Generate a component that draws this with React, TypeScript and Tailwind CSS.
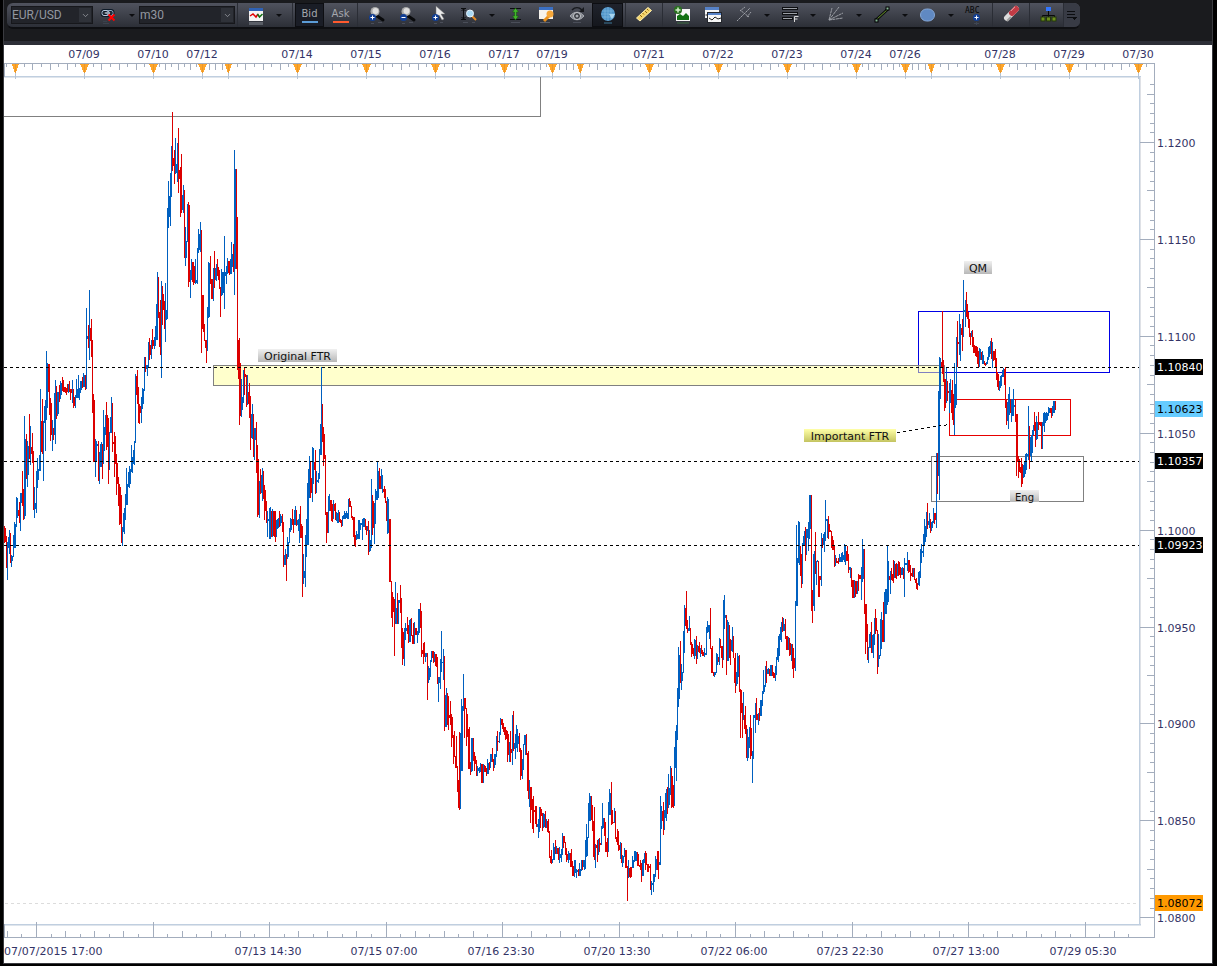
import { ReactNode } from "react";
import { ChevronDown } from "lucide-react";

/* Price bars, one per horizontal unit: first value is the x of the row's first bar,
   then u (up) or d (down) with high-low. */
const ROWS: [number, string][] = [
  [4, "d526-543 d528-542 d536-568 u542-580 u537-548 u530-554 d533-563 u555-567 u556-561 u535-557"],
  [14, "u522-548 u524-548 u497-527 u498-518 d510-516 d502-523 u493-531 u493-503 d471-506 d489-520"],
  [24, "u416-519 u439-516 d434-479 u441-487 u446-475 d414-459 u426-465 d447-454 d433-463 d451-510"],
  [34, "u487-518 u503-509 u471-513 u458-488 u469-480 u455-471 u389-471 d421-452 d399-454 u421-481"],
  [44, "u406-423 u400-451 u351-420 u363-408 d364-392 d364-415 d398-441 d403-435 u420-451 d428-440"],
  [54, "u393-435 u380-444 d386-419 u392-416 u392-414 d385-402 u381-399 u383-395 d377-391 d380-392"],
  [64, "d387-392 d387-393 d388-395 d384-392 u384-393 d381-392 d389-400 d389-393 u380-403 d389-408"],
  [74, "d397-406 u395-408 u379-398 u389-398 u375-398 u388-400 u381-393 u381-390 d377-388 u373-387"],
  [84, "u375-387 d375-390 u308-389 u336-339 d325-348 u290-360 d328-341 d319-357 d340-413 d394-462"],
  [94, "d400-462 u439-477 u441-462 u444-446 d441-481 u452-484 u444-467 u442-467 d444-479 u410-464"],
  [104, "u427-451 u415-435 d402-450 d415-447 d418-484 u432-470 u417-433 u397-433 d403-452 d442-444"],
  [114, "d432-477 d436-464 d454-495 d463-484 d477-506 d484-525 d487-524 d495-543 u527-546 u513-532"],
  [124, "u508-534 u494-520 u468-505 u484-505 u472-487 u466-488 u469-484 u445-472 u457-473 u450-464"],
  [134, "u441-465 u374-443 d376-395 d370-404 d387-423 d404-424 d406-413 u397-423 u388-409 u389-404"],
  [144, "u357-391 d357-372 u365-369 u365-376 u342-367 d338-360 d345-355 u340-359 d329-349 d340-346"],
  [154, "u337-349 u326-346 u304-340 u272-340 d277-318 d312-347 d300-355 u281-378 d286-325 d294-310"],
  [164, "d301-329 u283-342 u310-320 u208-319 u181-228 u196-217 u173-226 u146-197 d112-171 d158-166"],
  [174, "d150-184 u138-174 u164-173 u143-182 d128-193 d170-179 d167-217 d154-213 u195-210 u185-213"],
  [184, "d190-258 u227-266 u241-258 u204-242 d202-287 d205-282 u270-298 u259-280 d262-282 d262-285"],
  [194, "d266-283 u259-284 u280-283 u248-284 u229-253 u234-250 u222-252 d230-353 d295-329 d295-332"],
  [204, "d324-341 d340-348 d340-363 u307-351 u262-318 u263-317 d256-284 d279-299 d279-299 u268-301"],
  [214, "d251-288 u268-280 u264-281 d259-276 d267-280 d270-289 d287-317 u269-296 u272-295 u272-293"],
  [224, "u236-309 u272-276 u266-284 u258-274 d261-273 d261-275 u259-274 u242-274 u254-267 d244-272"],
  [234, "u150-295 u169-269 d169-269 d217-370 d340-379 d338-425 d363-416 u379-417 u397-410 u370-403"],
  [244, "d368-395 d374-377 d375-407 u375-405 d392-404 d383-418 d396-450 u414-438 u404-439 d414-457"],
  [254, "u428-460 u428-440 d422-473 d445-517 d459-515 u481-518 d469-494 u475-493 u468-501 d471-499"],
  [264, "d485-520 d490-511 d501-523 u511-537 u519-521 u508-539 u507-539 d511-537 u509-537 d511-536"],
  [274, "d511-537 d511-542 u520-537 u519-529 u518-528 d511-527 u514-526 u516-523 d514-532 d522-567"],
  [284, "u555-565 u549-565 d554-581 u537-559 u542-557 u528-543 u518-532 u519-530 d509-525 d519-533"],
  [294, "u510-525 u506-525 d510-526 u520-525 u519-531 u514-543 d506-538 d524-538 d526-597 u554-584"],
  [304, "u571-578 u535-587 u519-557 u483-545 u469-545 u456-498 d461-498 d478-493 u447-502 u448-484"],
  [314, "d462-470 d450-494 u471-493 u480-482 u473-483 u449-479 u424-455 u367-455 d404-442 d427-466"],
  [324, "d434-459 d455-515 d512-543 d512-533 u496-533 u494-511 d500-511 d500-521 d504-522 u500-519"],
  [334, "d504-511 d503-520 u512-521 u513-523 u510-523 d512-522 d519-523 d520-527 u516-526 u515-519"],
  [344, "u511-519 u513-519 u511-518 u513-519 u499-519 d498-507 d501-507 d506-518 d516-520 d517-537"],
  [354, "d517-545 d535-547 u531-540 u534-539 u520-539 u520-539 u523-530 u523-525 u519-540 u518-527"],
  [364, "u518-527 d519-530 d526-535 u526-531 d521-555 u530-552 u540-551 u479-548 d495-535 d501-528"],
  [374, "u503-544 u489-524 u491-500 u462-500 u471-498 d468-489 d476-489 u469-489 u475-493 d489-492"],
  [384, "d486-498 d489-503 d501-521 u497-534 u499-533 d519-582 d519-582 d581-618 d592-627 d597-612"],
  [394, "d599-656 u582-624 u608-624 d593-624 u600-624 u600-603 d585-613 d598-648 d628-665 d632-659"],
  [404, "u628-666 u623-640 u628-631 d617-634 d625-643 u620-642 u619-642 d618-636 d635-644 d623-644"],
  [414, "u622-644 d628-635 d628-635 u631-643 u609-635 u609-633 d603-628 d611-657 d650-654 d643-664"],
  [424, "d642-657 u653-662 u653-657 d653-700 u666-683 u668-680 u660-677 u651-662 d651-658 d651-663"],
  [434, "u652-662 d654-666 d654-667 d657-684 u677-702 u677-683 u659-689 u631-672 u662-663 u649-680"],
  [444, "d656-731 u695-727 u688-727 d693-725 d696-730 d715-718 d701-725 d714-747 d717-738 d735-764"],
  [454, "d731-757 d756-768 d736-768 d766-792 d780-808 d732-810 u733-809 u699-771 u706-771 u674-711"],
  [464, "d698-738 d698-709 d708-746 d714-737 d729-769 d727-769 d762-775 u738-772 u738-771 d738-761"],
  [474, "d752-771 d756-764 d760-776 u766-776 u768-771 u767-773 u763-772 d764-783 d764-783 u764-783"],
  [484, "d765-772 d766-772 d768-776 u759-774 u763-774 d762-770 u754-768 u754-762 d748-762 d759-771"],
  [494, "u754-768 u754-765 u736-757 d731-751 d741-742 u732-743 u718-735 d719-725 d719-729 d723-732"],
  [504, "d727-735 d727-740 d730-739 d731-762 d734-755 u742-762 d731-762 d749-753 u715-765 d711-751"],
  [514, "u743-749 u734-759 u725-748 u729-752 u736-744 d733-752 d748-780 d750-776 u759-779 u744-770"],
  [524, "u735-745 u735-755 d734-755 d753-791 d751-799 u780-807 d787-823 d787-810 d799-829 d796-833"],
  [534, "d810-812 d806-824 d806-827 u824-827 u819-838 u807-832 d807-828 d809-816 d813-831 u813-828"],
  [544, "u814-827 d811-828 u819-828 d821-832 d819-833 d831-858 d856-863 d850-864 u859-863 u843-860"],
  [554, "u847-860 d840-854 u846-854 d848-854 d848-860 u847-863 u854-858 u849-862 u833-855 d836-848"],
  [564, "d836-843 d842-855 d848-862 d854-860 u851-863 u853-860 d853-867 d849-867 d861-876 d866-876"],
  [574, "u860-877 u860-873 u869-878 u870-872 d869-876 u863-876 u869-876 u860-871 d860-870 u860-867"],
  [584, "u860-870 u840-869 u824-857 u837-856 u803-838 u793-821 u796-821 d796-820 d805-831 d821-857"],
  [594, "d807-860 u844-868 d845-848 d840-862 u839-855 d838-852 d843-845 u826-845 u803-829 u818-828"],
  [604, "d818-836 d822-852 d842-852 d838-857 u802-852 u789-815 u793-815 d782-825 d810-824 d822-823"],
  [614, "u808-823 d811-839 d837-842 d829-845 d831-851 d845-850 u842-859 d843-863 u855-867 u856-863"],
  [624, "u848-857 d850-868 d850-868 d866-901 u860-878 d868-877 d867-878 d867-877 u856-868 u860-868"],
  [634, "u851-862 u851-861 u852-861 d852-866 d854-866 d865-867 d860-870 d863-882 u860-876 u859-876"],
  [644, "u853-863 d851-870 d853-865 d864-872 d864-872 d866-868 d864-890 u881-895 u883-885 u874-892"],
  [654, "u874-882 u856-877 u859-870 d851-870 d851-879 u862-865 u796-865 u806-829 d811-821 d802-835"],
  [664, "u810-830 u793-818 u789-821 d787-814 u774-808 u788-805 u766-795 d768-808 d776-807 d785-808"],
  [674, "u747-806 u731-768 u725-781 u688-740 u647-707 u655-699 d641-683 u664-690 u672-681 u631-673"],
  [684, "u605-653 d608-626 d591-629 d620-633 u628-631 u616-631 d628-645 d642-657 d644-654 d648-656"],
  [694, "u639-659 u640-656 d636-664 u645-659 d646-652 d642-653 u648-657 d645-654 d650-656 d652-656"],
  [704, "u648-657 u653-655 u627-655 u621-633 u625-632 u625-639 d608-649 d648-673 d646-673 d672-676"],
  [714, "u672-677 u672-675 u653-673 u654-665 d657-662 u638-665 d639-648 d646-658 d646-668 u600-660"],
  [724, "u595-629 u615-618 d615-675 u620-661 u622-661 d625-658 d639-665 u640-651 u627-652 d636-658"],
  [734, "d658-683 d653-693 u672-686 u653-684 u656-677 d655-692 d689-738 d690-713 d703-738 u692-720"],
  [744, "d715-729 d706-734 d725-758 u729-761 u737-758 u727-748 d715-759 d728-756 u751-783 u715-759"],
  [754, "u715-718 u703-733 d698-720 d714-720 u713-725 d708-721 u700-716 u700-716 u691-706 u670-694"],
  [764, "u685-692 u666-687 d661-683 u669-674 u668-674 d669-676 u665-676 u665-676 d665-676 d672-678"],
  [774, "d673-678 u666-681 u657-675 u648-660 u636-662 u634-656 u627-640 u622-642 d617-632 u618-631"],
  [784, "u624-631 d619-639 d636-650 d636-650 u637-650 d638-656 d643-655 u644-661 d644-669 d648-678"],
  [794, "d658-668 u601-671 u525-606 u558-606 u521-563 u522-565 d546-576 d554-588 u543-584 u536-545"],
  [804, "u531-546 d527-561 u529-555 u529-538 u522-551 u495-539 u495-529 d495-611 d590-623 u554-606"],
  [814, "u551-611 d532-574 u561-585 u560-562 d561-597 d576-597 d576-580 u533-586 d538-548 u534-545"],
  [824, "u532-552 u500-541 u519-521 u519-538 d516-539 d524-532 d530-532 d531-548 d536-550 d540-550"],
  [834, "d546-567 u555-566 d558-563 d561-563 d558-564 u554-562 u557-562 u553-562 u552-562 u555-560"],
  [844, "u544-562 u545-565 d551-561 d546-561 d554-573 u567-570 u567-578 d568-587 d580-598 d580-598"],
  [854, "u580-598 d581-597 d581-594 u581-594 d574-591 d575-579 d575-579 u567-600 u539-582 u549-579"],
  [864, "d549-614 d604-654 d604-642 d624-660 u647-663 u634-648 u632-648 d622-653 u635-653 u634-658"],
  [874, "u618-645 d609-634 d618-631 d630-674 u634-667 u655-659 u619-656 u612-649 d620-642 d602-642"],
  [884, "u592-642 u589-614 u589-614 u546-605 u561-602 d576-580 u571-594 d568-580 d574-581 d560-583"],
  [894, "u561-578 d564-578 d563-579 u564-576 d561-576 d562-575 d567-578 u568-575 u567-575 d568-579"],
  [904, "u558-597 u563-565 u563-565 u552-571 d560-573 d560-572 d565-581 d573-576 d568-577 u568-577"],
  [914, "d568-580 d579-583 d578-589 d583-590 u572-585 u571-586 u549-578 u544-563 u551-553 u534-557"],
  [924, "u519-546 u526-542 u512-537 d503-529 u521-525 u513-528 d519-533 u522-531 u521-528 u508-523"],
  [934, "d513-524 d513-520 u453-528 d453-494 u391-476 u357-500 u358-399 d362-368 d311-374 d360-382"],
  [944, "d379-411 d379-408 u367-403 d381-401 d391-393 u383-413 u379-403 d390-413 d380-420 d394-425"],
  [954, "u363-435 u384-408 u337-405 d321-367 d342-344 u314-355 u324-361 d328-335 d319-351 u280-337"],
  [964, "u310-312 u300-327 d292-317 d304-319 d312-328 d319-337 d333-345 u331-337 d330-347 d337-353"],
  [974, "d345-353 d346-356 d346-357 d347-364 d351-367 u348-367 u349-360 d352-360 u351-364 u355-364"],
  [984, "d361-365 d363-366 u362-365 u357-364 u347-360 u346-357 u341-354 d338-359 u342-368 d351-361"],
  [994, "d351-360 d349-367 d358-380 d372-387 d374-390 u381-391 u376-388 u375-386 u370-377 u368-377"],
  [1004, "d369-385 d367-408 d399-425 u402-421 u394-429 u387-415 d399-413 u399-422 u399-416 u389-416"],
  [1014, "u405-407 d399-422 d414-476 d414-462 d456-478 d459-472 d467-473 d458-487 d464-484 u465-478"],
  [1024, "u461-477 u454-474 u453-470 u454-456 u406-460 d426-469 u437-456 u435-461 u430-453 u425-435"],
  [1034, "d412-431 d422-447 u416-440 u422-439 d412-430 d422-425 d422-426 d422-449 u422-449 u413-426"],
  [1044, "u412-432 u413-423 u412-421 u413-420 u407-416 u408-413 d408-413 d408-418 u406-416 u401-413"],
  [1054, "u401-413 d401-410"],
];

const BARS = ROWS.flatMap(([start, row]) =>
  row.split(" ").map((token, i) => {
    const [high, low] = token.slice(1).split("-").map(Number);
    return { x: start + i, high, low, up: token[0] === "u" };
  }),
);

const SESSIONS: { x: number; label?: string }[] = [
  { x: 15 },
  { x: 84, label: "07/09" },
  { x: 153, label: "07/10" },
  { x: 202, label: "07/12" },
  { x: 228 },
  { x: 297, label: "07/14" },
  { x: 366, label: "07/15" },
  { x: 435, label: "07/16" },
  { x: 504, label: "07/17" },
  { x: 552, label: "07/19" },
  { x: 580 },
  { x: 649, label: "07/21" },
  { x: 718, label: "07/22" },
  { x: 787, label: "07/23" },
  { x: 856, label: "07/24" },
  { x: 905, label: "07/26" },
  { x: 931 },
  { x: 1000, label: "07/28" },
  { x: 1069, label: "07/29" },
  { x: 1138, label: "07/30" },
];

const PRICES = ["1.1200", "1.1150", "1.1100", "1.1050", "1.1000", "1.0950", "1.0900", "1.0850", "1.0800"];
const TIMES = ["07/13 14:30", "07/15 07:00", "07/16 23:30", "07/20 13:30", "07/22 06:00", "07/23 22:30", "07/27 13:00", "07/29 05:30"];

const TAGS = [
  { y: 367, text: "1.10840", bg: "#000000", fg: "#ffffff" },
  { y: 409, text: "1.10623", bg: "#66ccff", fg: "#000000" },
  { y: 461, text: "1.10357", bg: "#000000", fg: "#ffffff" },
  { y: 545, text: "1.09923", bg: "#000000", fg: "#ffffff" },
  { y: 903, text: "1.08072", bg: "#ff9900", fg: "#000000" },
];

const NOTES = [
  { x: 258, y: 349, w: 79, h: 13, text: "Original FTR", size: 11, fill: "url(#note-gray)" },
  { x: 964, y: 261, w: 28, h: 13, text: "QM", size: 11, fill: "url(#note-gray)" },
  { x: 804, y: 429, w: 92, h: 13, text: "Important FTR", size: 11, fill: "url(#note-yellow)" },
  { x: 1010, y: 490, w: 29, h: 12, text: "Eng", size: 10, fill: "url(#note-gray)" },
];

function TopAxis() {
  return (
    <g>
      <rect x="4" y="63" width="1151" height="1" fill="#a3adbd" />
      <rect x="4" y="76" width="1137" height="1" fill="#c0cfe0" />
      <rect x="4" y="77" width="1136" height="1" fill="#dfe5ec" />
      <rect x="4" y="63" width="1" height="14" fill="#a3adbd" />
      <rect x="6" y="64" width="1" height="3" fill="#a3adbd" />
      {SESSIONS.slice(0, -1).flatMap((s, i) => {
        const span = SESSIONS[i + 1].x - s.x;
        const parts = span < 35 ? 4 : 8;
        return Array.from({ length: parts - 1 }, (_, k) => (
          <rect
            key={`${i}-${k}`}
            x={Math.round(s.x + (span * (k + 1)) / parts)}
            y="64"
            width="1"
            height={parts === 4 || k % 2 ? 6 : 3}
            fill="#a3adbd"
          />
        ));
      })}
      <rect x="1146" y="64" width="1" height="3" fill="#a3adbd" />
      {SESSIONS.map((s) => {
        const half = s.label ? 4 : 3;
        return (
          <g key={s.x}>
            <rect x={s.x} y="72" width="1" height="7" fill="#b4c3d4" />
            <polygon points={`${s.x - half},64 ${s.x + half + 1},64 ${s.x + 1},73 ${s.x},73`} fill="#ffa529" />
            <rect x={s.x} y="64" width="1" height="9" fill="#e8982c" />
            {s.label && (
              <text x={s.x} y="58" textAnchor="middle" fontSize="11" fill="#333366">
                {s.label}
              </text>
            )}
          </g>
        );
      })}
    </g>
  );
}

function PriceAxis() {
  const step = 96.9;
  const ticks = Array.from({ length: 87 }, (_, i) => i - 6);
  return (
    <g>
      <rect x="1139" y="76" width="1" height="849" fill="#c0cfe0" />
      <rect x="1140" y="77" width="1" height="848" fill="#dfe1e6" />
      <rect x="1154" y="63" width="1" height="875" fill="#a3adbd" />
      {ticks.map((n) => {
        const length = n % 10 === 0 ? 14 : n % 5 === 0 ? 7 : 4;
        return (
          <rect key={n} x={1154 - length} y={Math.round(142 + (n * step) / 10)} width={length} height="1" fill="#a3adbd" />
        );
      })}
      {PRICES.map((p, i) => (
        <text key={p} x="1157" y={Math.round(147 + i * step)} fontSize="11" fill="#333366">
          {p}
        </text>
      ))}
    </g>
  );
}

function TimeAxis() {
  const step = 116.5;
  const ticks = Array.from({ length: 78 }, (_, i) => i - 2).filter((n) => 36 + (n * step) / 8 < 1150);
  return (
    <g>
      <rect x="4" y="924" width="1137" height="1" fill="#c0cfe0" />
      <rect x="4" y="925" width="1137" height="1" fill="#dfe5ec" />
      <rect x="4" y="937" width="1151" height="1" fill="#a3adbd" />
      <rect x="4" y="924" width="1" height="13" fill="#a3adbd" />
      {ticks.map((n) => {
        const height = n % 8 === 0 ? 15 : n % 2 === 0 ? 6 : 3;
        return <rect key={n} x={Math.round(36 + (n * step) / 8)} y={937 - height} width="1" height={height} fill="#a3adbd" />;
      })}
      <text x="4" y="955" fontSize="11" fill="#333366">
        07/07/2015 17:00
      </text>
      {TIMES.map((t, i) => (
        <text key={t} x={Math.round(268 + i * 116.4)} y="955" textAnchor="middle" fontSize="11" fill="#333366">
          {t}
        </text>
      ))}
    </g>
  );
}

function PriceChart() {
  return (
    <svg
      viewBox="4 45 1208 918"
      className="block h-auto w-full bg-white font-['DejaVu_Sans',sans-serif]"
      role="img"
      aria-label="EUR/USD 30 minute chart"
    >
      <defs>
        <linearGradient id="note-gray" x1="0" y1="0" x2="0" y2="1">
          <stop offset="0" stopColor="#f0f0f0" />
          <stop offset="1" stopColor="#b8b8b8" />
        </linearGradient>
        <linearGradient id="note-yellow" x1="0" y1="0" x2="0" y2="1">
          <stop offset="0" stopColor="#ffffa8" />
          <stop offset="1" stopColor="#c4c460" />
        </linearGradient>
      </defs>
      <g shapeRendering="crispEdges">
        <TopAxis />
        <PriceAxis />
        <TimeAxis />
        <path d="M4 116.5H540.5V77" fill="none" stroke="#808080" />
        <path d="M5 903.5H1139" stroke="#dcdcdc" strokeDasharray="3 3" />
        <rect x="918.5" y="311.5" width="191" height="61" fill="none" stroke="#0000e6" />
        <rect x="213.5" y="365.5" width="731" height="20" fill="#ffff99" fillOpacity="0.5" stroke="#808080" />
        <rect x="949.5" y="399.5" width="121" height="36" fill="none" stroke="#e60000" />
        <rect x="931.5" y="456.5" width="152" height="45" fill="none" stroke="#808080" />
        {BARS.map((b) => (
          <rect key={b.x} x={b.x} y={b.high} width="1" height={b.low - b.high} fill={b.up ? "#0060c0" : "#dc0000"} />
        ))}
        {[367, 461, 545].map((y) => (
          <path key={y} d={`M4 ${y}.5H1139`} stroke="#000000" strokeDasharray="3 3" />
        ))}
        <path d="M897 432.5L949 424.5" stroke="#000000" strokeDasharray="3 3" />
      </g>
      {NOTES.map((n) => (
        <g key={n.text}>
          <rect x={n.x} y={n.y} width={n.w} height={n.h} fill={n.fill} />
          <text x={n.x + n.w / 2} y={n.y + 11} textAnchor="middle" fontSize={n.size} fill="#111111">
            {n.text}
          </text>
        </g>
      ))}
      {TAGS.map((t) => (
        <g key={t.text}>
          <rect x="1155" y={t.y - 8} width="48" height="16" fill={t.bg} />
          <text x="1157" y={t.y + 4} fontSize="11" fill={t.fg}>
            {t.text}
          </text>
        </g>
      ))}
    </svg>
  );
}

function Icon({ children }: { children: ReactNode }) {
  return (
    <svg width="18" height="20" viewBox="0 -2 18 20" fill="none" aria-hidden="true" className="overflow-visible">
      {children}
    </svg>
  );
}

function PlusBadge({ x, y, minus }: { x: number; y: number; minus?: boolean }) {
  return (
    <g>
      <circle cx={x} cy={y} r="3.5" fill="#123f95" />
      <path d={minus ? `M${x - 2} ${y}h4` : `M${x - 2} ${y}h4M${x} ${y - 2}v4`} stroke="#fff" />
    </g>
  );
}

const LinkIcon = () => (
  <Icon>
    <rect x="2" y="3.5" width="7" height="5" rx="2" stroke="#0d1a28" strokeWidth="3" />
    <rect x="7" y="3.5" width="6" height="5" rx="2" stroke="#0d1a28" strokeWidth="3" />
    <rect x="2" y="3.5" width="7" height="5" rx="2" stroke="#b6cbe0" />
    <rect x="7" y="3.5" width="6" height="5" rx="2" stroke="#8fa9c4" />
    <path d="M5 6h5" stroke="#dce9f5" />
    <path d="M8.500 7.500l6 6M14.500 7.500l-6 6" stroke="#ff0000" strokeWidth="2" />
    <path d="M3 16.500h6M3 14.500h4" stroke="#3c424d" />
  </Icon>
);

const ChartIcon = () => (
  <Icon>
    <rect x="2" y="1" width="14" height="13" fill="#f4f4f4" />
    <rect x="2" y="1" width="14" height="3" fill="#2f62b5" />
    <path d="M3 9l3-2 3 3 2-3" stroke="#e00000" strokeWidth="1.5" />
    <path d="M10.500 7l2 3 3-3" stroke="#107010" strokeWidth="1.5" />
    <rect x="2" y="15" width="14" height="3" fill="#777b83" opacity=".6" />
  </Icon>
);

const ZoomIcon = ({ minus }: { minus?: boolean }) => (
  <Icon>
    <path d="M10 9l6 4" stroke="#08090b" strokeWidth="3" strokeLinecap="round" />
    <circle cx="8" cy="4.500" r="4.500" fill="#a8a8a8" />
    <circle cx="8.500" cy="4" r="3" fill="#dedede" />
    <PlusBadge x={5.5} y={10.5} minus={minus} />
    <path d="M4 16.500h3M11 15.500h4" stroke="#4a4e59" />
  </Icon>
);

const CursorIcon = () => (
  <Icon>
    <path d="M7 -1v11l3-2 3 5 2-1-3-5h4z" fill="#ececec" stroke="#777" strokeWidth=".5" />
    <PlusBadge x={6.5} y={10.5} />
    <path d="M5 16.500h3M11 15.500h3" stroke="#4a4e59" />
  </Icon>
);

const ZoomYIcon = () => (
  <Icon>
    <path d="M3.500 2v10M1 1.500h5M1 12.500h5M1.500 4l2-2 2 2M1.500 10l2 2 2-2" stroke="#0b0c0e" />
    <path d="M12 9l4 4" stroke="#e58b24" strokeWidth="2" />
    <circle cx="10" cy="6.500" r="3.500" fill="#a9d9f4" stroke="#e6f4fc" />
    <path d="M3 15.500h5M12 15.500h3" stroke="#4a4e59" />
  </Icon>
);

const StretchIcon = () => (
  <Icon>
    <path d="M4 1.500h11M4 12.500h11" stroke="#0b0c0e" />
    <path d="M9.500 1l3 4h-2v4h2l-3 4-3-4h2V5h-2z" fill="#43b52c" stroke="#125d0b" strokeWidth=".5" />
    <path d="M5 15.500h9" stroke="#4a4e59" />
  </Icon>
);

const WindowKeyIcon = () => (
  <Icon>
    <rect x="2" y="0" width="14" height="12" fill="#f6f3ee" />
    <rect x="2" y="0" width="14" height="3" fill="#3b70c4" />
    <path d="M7 14l6-6" stroke="#e8901c" strokeWidth="3" />
    <circle cx="13" cy="7" r="3.500" fill="#f6a73a" />
    <path d="M3 15.500h10" stroke="#5c606b" />
  </Icon>
);

const EyeIcon = () => (
  <Icon>
    <path d="M2 9c4-5 10-5 14 0-4 5-10 5-14 0z" fill="#858990" stroke="#a7aab0" />
    <circle cx="9" cy="9" r="3.500" fill="#34373e" stroke="#c8cacf" />
    <circle cx="9" cy="9" r="1.500" fill="#a7aab0" />
    <path d="M4 3c3-3 7-3 10 0" stroke="#17191d" strokeWidth="1.500" />
    <path d="M16 0v5h-5z" fill="#17191d" />
    <path d="M5 15.500h8" stroke="#4a4e59" />
  </Icon>
);

const GlobeIcon = () => (
  <Icon>
    <circle cx="9" cy="7" r="7" fill="#4f94c8" />
    <path d="M3 4h12M2 7h14M3 10h12M6 1v12M9 0v14M12 1v12" stroke="#86bce0" strokeWidth=".6" />
    <path d="M10 7h6l-3 5z" fill="#a8d4ee" />
    <path d="M5 16h8" stroke="#2a485c" strokeWidth="2" />
  </Icon>
);

const RulerIcon = () => (
  <Icon>
    <path d="M1.500 11L13 .5l3.500 3L5 14z" fill="#f5d469" stroke="#fff0b0" />
    <path d="M5 8l2 2M7.500 6l1.500 1.500M10 4l2 2M12 2l1.500 1.500" stroke="#8a6410" />
  </Icon>
);

const ImageAddIcon = () => (
  <Icon>
    <rect x="3" y="2" width="14" height="12" fill="#f7f7f7" />
    <path d="M4 13V9l3-2 3 2 3-3 3 3v4z" fill="#127012" />
    <circle cx="5" cy="3" r="4" fill="#28701f" />
    <path d="M2.500 3h5M5 .5v5" stroke="#d4f0cb" strokeWidth="1.500" />
    <path d="M4 16h12" stroke="#37503f" strokeWidth="2" />
  </Icon>
);

const WindowsIcon = () => (
  <Icon>
    <rect x="1" y="0" width="14" height="11" fill="#f5f5f5" />
    <rect x="1" y="0" width="14" height="3" fill="#5682c8" />
    <rect x="3.500" y="5.500" width="14" height="10" fill="#f5f5f5" stroke="#23262c" />
    <rect x="4" y="6" width="13" height="2" fill="#5682c8" />
    <path d="M1.500 8h2M5 11l3 2 3-3 3 2 3-1" stroke="#222" />
  </Icon>
);

const PitchforkIcon = () => (
  <Icon>
    <path d="M2 14L10 6M5 3l9 7M5 4l5-4M9 7l6-6M12 10l4-5" stroke="#9da0a7" strokeDasharray="2 .5" />
  </Icon>
);

const FibIcon = () => (
  <Icon>
    <path d="M1 1.500h16M1 6.500h16M1 11.500h11" stroke="#0f1013" strokeWidth="3" />
    <path d="M2 1.500h14M2 6.500h14M2 11.500h9" stroke="#9b9fa6" />
    <path d="M13.500 15V9.500h4M13.500 12h3" stroke="#d8d8d8" />
  </Icon>
);

const FanIcon = () => (
  <Icon>
    <path d="M2 13L5 1M2 13L12 0M2 13L16 6M2 13L16 11" stroke="#9da0a7" strokeDasharray="3 .5" />
  </Icon>
);

const LineIcon = () => (
  <Icon>
    <path d="M3 13L15 2" stroke="#0b0c0e" strokeWidth="3" />
    <path d="M3 13L15 2" stroke="#6c9a2b" />
    <rect x="2" y="12" width="3" height="3" fill="#8b9" stroke="#000" />
    <rect x="13" y="0" width="3" height="3" fill="#8b9" stroke="#000" />
  </Icon>
);

const EllipseIcon = () => (
  <Icon>
    <rect x="1.500" y="2" width="14" height="12" rx="6" fill="#6089c2" stroke="#84a7d6" />
  </Icon>
);

const TextIcon = () => (
  <Icon>
    <text x="0" y="6" fontSize="8" fill="#050506" className="font-['DejaVu_Sans_Mono',monospace]">
      ABC
    </text>
    <PlusBadge x={11.5} y={10.5} />
    <path d="M9 16.500h5M11.500 15v3" stroke="#3f4653" />
  </Icon>
);

const EraserIcon = () => (
  <Icon>
    <path d="M4 11L13 2" stroke="#dcdcdc" strokeWidth="6" strokeLinecap="round" />
    <path d="M9 6l4-4" stroke="#c23b45" strokeWidth="6" strokeLinecap="round" />
    <path d="M8 4l4-4" stroke="#e88a90" />
    <path d="M4 14l4-4" stroke="#9c9c9c" strokeWidth="2" />
  </Icon>
);

const TreeIcon = () => (
  <Icon>
    <path d="M9.500 4v7M3.500 11v-2.500h12V11" stroke="#08090b" />
    <rect x="7" y="0" width="5" height="4" fill="#3377ff" />
    <rect x="2" y="10" width="4" height="4" fill="#6c8f1c" stroke="#24380a" />
    <rect x="7.500" y="10" width="4" height="4" fill="#6c8f1c" stroke="#24380a" />
    <rect x="13" y="10" width="4" height="4" fill="#6c8f1c" stroke="#24380a" />
  </Icon>
);

function Tool({ label, children, active }: { label: string; children: ReactNode; active?: boolean }) {
  return (
    <button
      type="button"
      aria-label={label}
      className={`flex h-6 w-[31px] shrink-0 items-center justify-center ${
        active ? "border border-[#0d0e12] bg-linear-to-b from-[#20232c] to-[#15171d]" : ""
      }`}
    >
      {children}
    </button>
  );
}

function Drop({ label }: { label: string }) {
  return (
    <button type="button" aria-label={label} className="flex h-6 w-[15px] shrink-0 items-center justify-center">
      <svg width="6" height="3" viewBox="0 0 6 3" aria-hidden="true">
        <path d="M0 0h6L3 3z" fill="#0c0d10" />
      </svg>
    </button>
  );
}

function Divider({ wide }: { wide?: boolean }) {
  return <span className={`h-6 w-px shrink-0 bg-[#2a2d35] ${wide ? "mx-[3px]" : "mx-0.5"}`} />;
}

function Picker({ label, width, options }: { label: string; width: string; options: string[] }) {
  return (
    <div className={`relative flex h-[18px] shrink-0 items-center border border-[#16171b] bg-[#22242a] ${width}`}>
      <select
        aria-label={label}
        className="h-4 w-full appearance-none bg-transparent font-['Roboto',sans-serif] text-xs leading-4 text-[#9297a0] outline-none"
      >
        {options.map((o) => (
          <option key={o}>{o}</option>
        ))}
      </select>
      <span className="pointer-events-none absolute right-px flex h-[14px] w-3 items-center justify-center bg-[#2f3239]">
        <ChevronDown size={9} color="#a0a3a9" />
      </span>
    </div>
  );
}

function Quote({ text, bar, active }: { text: string; bar: string; active?: boolean }) {
  return (
    <button
      type="button"
      aria-pressed={!!active}
      className={`flex h-6 w-[29px] shrink-0 flex-col items-center justify-center gap-px font-['DejaVu_Sans',sans-serif] text-[10px] leading-3 text-[#a4a7ad] ${
        active ? "border border-[#0d0e12] bg-[#1a1d26]" : ""
      }`}
    >
      {text}
      <span className={`h-0.5 w-4 ${bar}`} />
    </button>
  );
}

function Toolbar() {
  return (
    <header className="overflow-hidden border-b-4 border-[#2d2f37] bg-[#1a1b1e] pt-[3px]">
      <div className="mb-3 ml-[3px] flex h-[26px] w-fit items-center rounded-md border-b-2 border-[#0e0f12] bg-linear-to-b from-[#50535e] to-[#2c2f37] pl-1">
        <Picker label="Symbol" width="w-[82px]" options={["EUR/USD", "GBP/USD"]} />
        <Tool label="Unlink symbol"><LinkIcon /></Tool>
        <Drop label="Link options" />
        <Picker label="Period" width="w-[96px]" options={["m30", "H1"]} />
        <Divider />
        <Tool label="Chart type"><ChartIcon /></Tool>
        <Drop label="Chart type options" />
        <span className="w-1" />
        <Divider />
        <Quote text="Bid" bar="bg-[#5b9bd5]" active />
        <span className="w-0.5" />
        <Quote text="Ask" bar="bg-[#ff5a2e]" />
        <Divider />
        <Tool label="Zoom in"><ZoomIcon /></Tool>
        <Tool label="Zoom out"><ZoomIcon minus /></Tool>
        <Tool label="Pointer"><CursorIcon /></Tool>
        <Tool label="Vertical zoom"><ZoomYIcon /></Tool>
        <Drop label="Vertical zoom options" />
        <Tool label="Fit height"><StretchIcon /></Tool>
        <Tool label="Properties"><WindowKeyIcon /></Tool>
        <Tool label="Show or hide"><EyeIcon /></Tool>
        <Tool label="Crosshair" active><GlobeIcon /></Tool>
        <Divider />
        <Tool label="Ruler"><RulerIcon /></Tool>
        <Divider wide />
        <Tool label="Add indicator"><ImageAddIcon /></Tool>
        <Tool label="Arrange windows"><WindowsIcon /></Tool>
        <Tool label="Pitchfork"><PitchforkIcon /></Tool>
        <Drop label="Pitchfork options" />
        <Tool label="Fibonacci"><FibIcon /></Tool>
        <Drop label="Fibonacci options" />
        <Tool label="Fan"><FanIcon /></Tool>
        <Drop label="Fan options" />
        <Tool label="Line"><LineIcon /></Tool>
        <Drop label="Line options" />
        <Tool label="Ellipse"><EllipseIcon /></Tool>
        <Drop label="Ellipse options" />
        <Tool label="Text"><TextIcon /></Tool>
        <Divider wide />
        <Tool label="Eraser"><EraserIcon /></Tool>
        <Divider />
        <Tool label="Object tree"><TreeIcon /></Tool>
        <span className="h-6 w-px bg-[#2a2d35]" />
        <button type="button" aria-label="More tools" className="flex h-6 w-4 items-center justify-center rounded-r-md bg-[#383b45]">
          <svg width="10" height="12" viewBox="0 0 10 12" shapeRendering="crispEdges" aria-hidden="true">
            <path d="M0 2.500h8M0 5.500h8M0 8.500h5" stroke="#0c0d10" />
            <path d="M5 8h5l-2.500 3z" fill="#0c0d10" />
          </svg>
        </button>
      </div>
    </header>
  );
}

export default function App() {
  return (
    <div className="min-h-screen bg-black pr-1 pl-[3px]">
      <div className="border-x border-b border-[#3a3b40]">
        <Toolbar />
        <main>
          <PriceChart />
        </main>
      </div>
    </div>
  );
}
